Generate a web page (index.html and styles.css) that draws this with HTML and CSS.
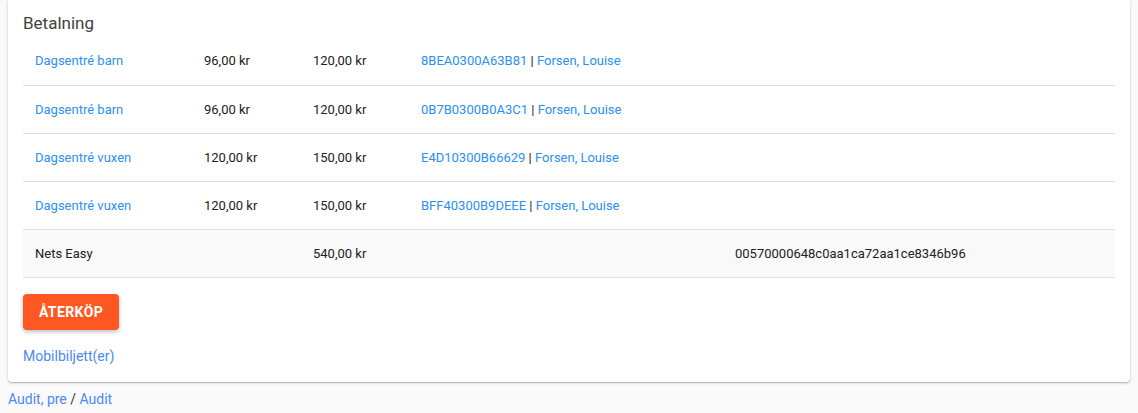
FILE: index.html
```html
<!DOCTYPE html>
<html lang="sv">
<head>
    <meta charset="UTF-8">
    <title>Betalning</title>
    <link rel="stylesheet" href="styles.css">
</head>
<body>
<div class="card">
    <h2 class="title">Betalning</h2>
    <table class="pay">
        <tr>
            <td class="c1"><a href="#">Dagsentré barn</a></td>
            <td class="c2">96,00 kr</td>
            <td class="c3">120,00 kr</td>
            <td class="c4"><a href="#">8BEA0300A63B81</a> | <a href="#">Forsen, Louise</a></td>
            <td></td>
        </tr>
        <tr>
            <td class="c1"><a href="#">Dagsentré barn</a></td>
            <td class="c2">96,00 kr</td>
            <td class="c3">120,00 kr</td>
            <td class="c4"><a href="#">0B7B0300B0A3C1</a> | <a href="#">Forsen, Louise</a></td>
            <td></td>
        </tr>
        <tr>
            <td class="c1"><a href="#">Dagsentré vuxen</a></td>
            <td class="c2">120,00 kr</td>
            <td class="c3">150,00 kr</td>
            <td class="c4"><a href="#">E4D10300B66629</a> | <a href="#">Forsen, Louise</a></td>
            <td></td>
        </tr>
        <tr>
            <td class="c1"><a href="#">Dagsentré vuxen</a></td>
            <td class="c2">120,00 kr</td>
            <td class="c3">150,00 kr</td>
            <td class="c4"><a href="#">BFF40300B9DEEE</a> | <a href="#">Forsen, Louise</a></td>
            <td></td>
        </tr>
        <tr class="total">
            <td class="c1">Nets Easy</td>
            <td class="c2"></td>
            <td class="c3">540,00 kr</td>
            <td class="c4"></td>
            <td>00570000648c0aa1ca72aa1ce8346b96</td>
        </tr>
    </table>
    <button class="btn">ÅTERKÖP</button>
    <a class="mobile" href="#">Mobilbiljett(er)</a>
</div>
<div class="crumbs"><a href="#">Audit, pre</a> / <a href="#">Audit</a></div>
</body>
</html>
```

FILE: styles.css
```css
* {
    margin: 0;
    padding: 0;
    box-sizing: border-box;
}

body {
    background-color: #fafafa;
    font-family: Roboto, "Liberation Sans", sans-serif;
    color: #212121;
    padding: 0 8px;
}

a {
    text-decoration: none;
}

.card {
    background-color: #fff;
    padding: 11px 15px 16px 15px;
    border-radius: 0 0 4px 4px;
    box-shadow: 0 1px 3px rgba(0, 0, 0, .2), 0 1px 1px rgba(0, 0, 0, .14);
}

.title {
    font-size: 17px;
    font-weight: 400;
    line-height: 24px;
    color: #424242;
    margin-bottom: 2px;
}

.pay {
    width: 100%;
    border-collapse: collapse;
    font-size: 13px;
}

.pay tr {
    height: 48px;
}

.pay td {
    padding: 0 12px;
    border-bottom: 1px solid #e0e0e0;
    vertical-align: middle;
    white-space: nowrap;
}

.pay a {
    color: #2b90f0;
}

.pay .c1 {
    width: 169px;
}

.pay .c2 {
    width: 109px;
}

.pay .c3 {
    width: 108px;
}

.pay .c4 {
    width: 314px;
}

.pay .total td {
    background-color: #f9f9f9;
}

.btn {
    display: block;
    margin-top: 16px;
    width: 96px;
    height: 36px;
    border: none;
    border-radius: 4px;
    background-color: #ff5722;
    color: #fff;
    font-family: inherit;
    font-size: 14px;
    font-weight: 700;
    letter-spacing: .4px;
    box-shadow: 0 2px 4px rgba(0, 0, 0, .25);
}

.mobile {
    display: block;
    margin-top: 16px;
    font-size: 14px;
    line-height: 20px;
    color: #4a8af4;
}

.crumbs {
    margin-top: 7px;
    font-size: 14px;
    line-height: 20px;
    color: #333;
}

.crumbs a {
    color: #4a8af4;
}
```
